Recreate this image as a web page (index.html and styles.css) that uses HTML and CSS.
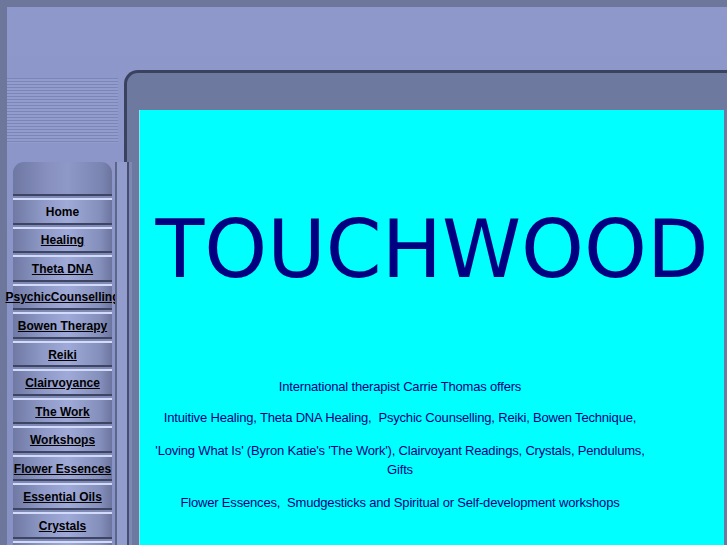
FILE: index.html
```html
<!DOCTYPE html>
<html lang="en">

<head>
    <meta charset="UTF-8">
    <meta name="viewport" content="width=device-width, initial-scale=1.0">
    <title>Touchwood</title>
    <link rel="stylesheet" href="styles.css">
</head>

<body>

    <div class="frame">
        <div class="side">
            <div class="stripes"></div>
            <div class="nav-wrap">
                <div class="nav">
                    <div class="nav-cap"></div>
                    <a class="nav-item home" href="#">Home</a>
                    <a class="nav-item" href="#">Healing</a>
                    <a class="nav-item" href="#">Theta DNA</a>
                    <a class="nav-item" href="#">PsychicCounselling</a>
                    <a class="nav-item" href="#">Bowen Therapy</a>
                    <a class="nav-item" href="#">Reiki</a>
                    <a class="nav-item" href="#">Clairvoyance</a>
                    <a class="nav-item" href="#">The Work</a>
                    <a class="nav-item" href="#">Workshops</a>
                    <a class="nav-item" href="#">Flower Essences</a>
                    <a class="nav-item" href="#">Essential Oils</a>
                    <a class="nav-item" href="#">Crystals</a>
                    <div class="nav-item"></div>
                </div>
                <div class="strip"></div>
            </div>
        </div>

        <div class="panel">
            <div class="content">
                <h1 class="title">TOUCHWOOD</h1>
                <div class="intro">
                    <p>International therapist Carrie Thomas offers</p>
                    <p>Intuitive Healing, Theta DNA Healing,&nbsp; Psychic Counselling, Reiki, Bowen Technique,</p>
                    <p>'Loving What Is' (Byron Katie's 'The Work'), Clairvoyant Readings, Crystals, Pendulums, Gifts</p>
                    <p>Flower Essences,&nbsp; Smudgesticks and Spiritual or Self-development workshops</p>
                </div>
            </div>
        </div>
    </div>

</body>

</html>
```

FILE: styles.css
```css
body {
    margin: 0;
    height: 545px;
    overflow: hidden;
    background-color: #6c779b;
    font-family: 'Liberation Sans', Arial, sans-serif;
}

.frame {
    margin: 7px 0 0 7px;
    height: 538px;
    display: grid;
    grid-template-columns: 117px 1fr;
    background-color: #8b95c7;
    background-image: linear-gradient(to bottom, #8e98cb, #8891c3);
}

/* left column */
.side {
    padding-top: 71px;
}

.stripes {
    width: 111px;
    height: 65px;
    margin-bottom: 19px;
    background: repeating-linear-gradient(to bottom, #7c86b6 0 1px, #939dcd 1px 3px);
}

.nav-wrap {
    display: flex;
}

.nav {
    flex-shrink: 0;
    width: 99px;
    margin-left: 6px;
}

.nav-cap {
    height: 32px;
    border-radius: 11px 11px 0 0;
    background: linear-gradient(to right, #6e78a2, #8790bf 35%, #8f99c8 55%, #7a84b1 90%, #6a749c);
}

.nav-item {
    display: flex;
    justify-content: center;
    align-items: center;
    box-sizing: border-box;
    height: 28.55px;
    padding-top: 7px;
    white-space: nowrap;
    font-size: 12px;
    font-weight: bold;
    color: #000;
    background:
        linear-gradient(to bottom, #3d4562 0 2px, #7f89b6 2px 4px, #d3dbfb 4px 6px, transparent 6px),
        linear-gradient(to right, #6f79a3, #8f99c7 30%, #a0aad8 55%, #858fbb 88%, #6b759e);
}

.home {
    text-decoration: none;
}

/* bar between menu and page */
.strip {
    position: relative;
    flex-shrink: 0;
    width: 17px;
    margin-left: 3px;
    background: linear-gradient(to right, #5d6688 0 2px, #939dcd 2px 12px, #474f6e 12px 14px, #7e88b6 14px 17px);
}

/* main panel */
.panel {
    margin-top: 63px;
    border-top: 3px solid #3b4260;
    border-left: 3px solid #3b4260;
    border-top-left-radius: 14px;
    padding: 37px 3px 0 12px;
    background-color: #6e79a0;
}

.content {
    height: 500px;
    background-color: #00ffff;
    color: #000080;
    border-left: 1px solid #7fe8f0;
}

.title {
    margin: 0;
    padding-top: 93px;
    font-family: 'DejaVu Sans', sans-serif;
    font-size: 80px;
    font-weight: normal;
    line-height: 93px;
    text-align: center;
}

.intro {
    width: 510px;
    margin: 81px 0 0 5px;
    text-align: center;
    font-size: 13px;
    letter-spacing: -0.18px;
    line-height: 19px;
}

.intro p {
    margin: 0 0 14px;
}

.intro p:first-child {
    margin-bottom: 12px;
}
```
